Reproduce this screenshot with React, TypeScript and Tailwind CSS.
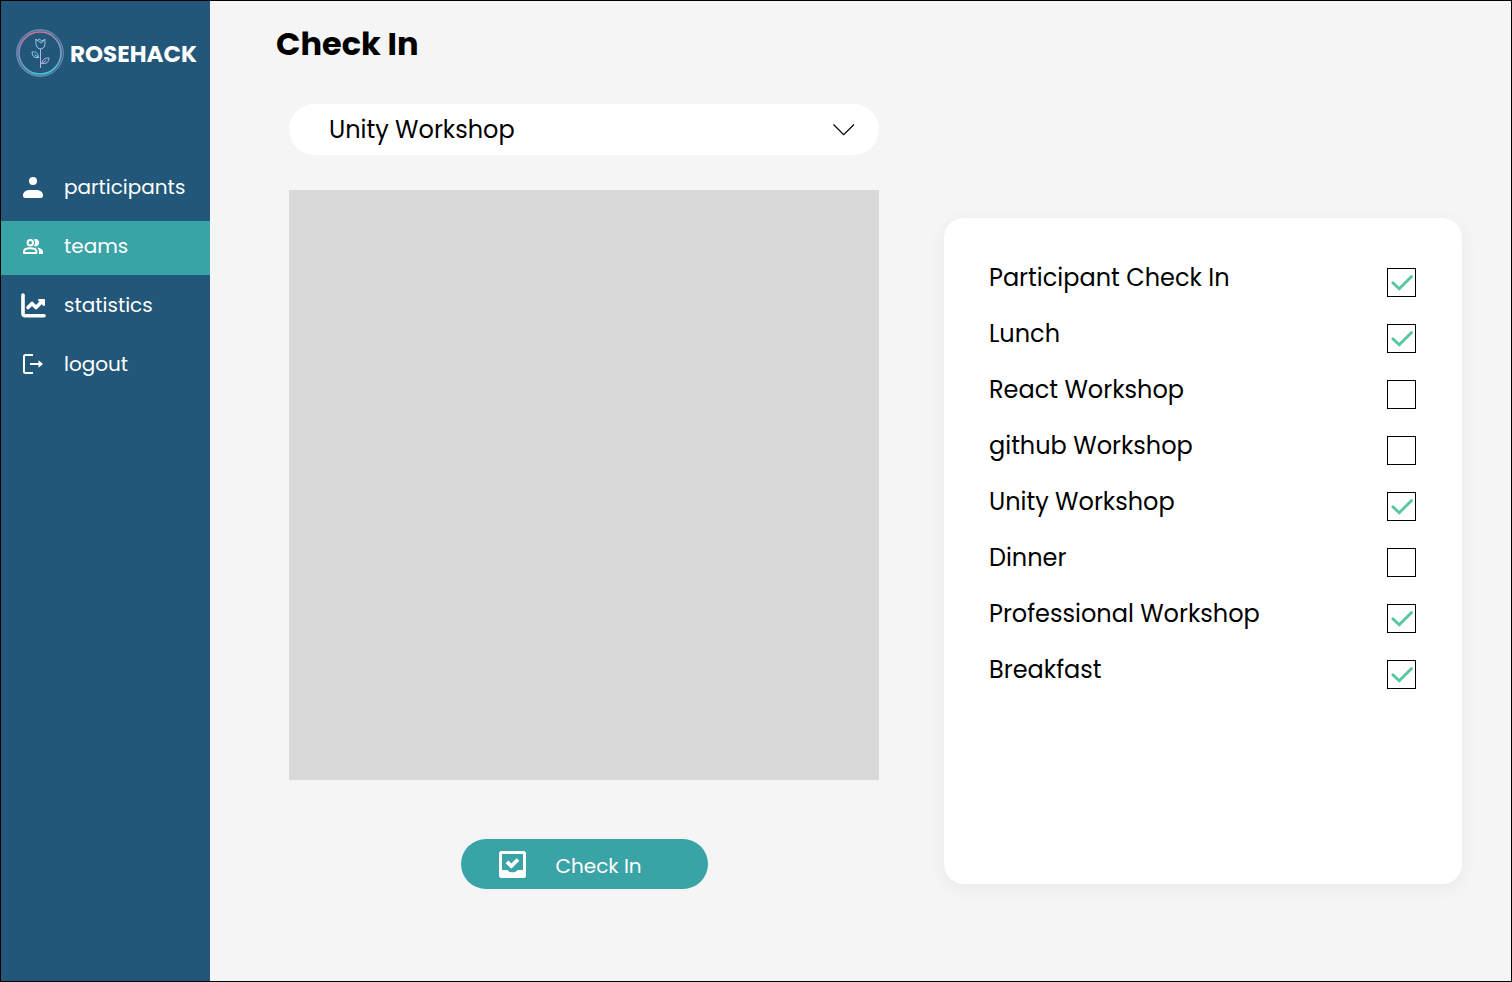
import { useState } from "react";
import type { ReactNode } from "react";

const EVENTS = [
  { name: "Participant Check In", done: true },
  { name: "Lunch", done: true },
  { name: "React Workshop", done: false },
  { name: "github Workshop", done: false },
  { name: "Unity Workshop", done: true },
  { name: "Dinner", done: false },
  { name: "Professional Workshop", done: true },
  { name: "Breakfast", done: true },
];

function RoseLogo() {
  return (
    <svg viewBox="0 0 48 48" className="size-12 shrink-0" fill="none" aria-hidden="true">
      <defs>
        <linearGradient id="ring" x1="0.3" y1="0" x2="0.6" y2="1">
          <stop offset="0" stopColor="#e0708f" />
          <stop offset="0.3" stopColor="#8a86b8" />
          <stop offset="0.7" stopColor="#6f9fd0" />
          <stop offset="1" stopColor="#35cfd8" />
        </linearGradient>
      </defs>
      <circle cx="24" cy="24" r="23.3" stroke="#8fa9cb" strokeWidth="0.8" />
      <circle cx="24" cy="24" r="21" stroke="url(#ring)" strokeWidth="1.600" />
      <ellipse cx="23.4" cy="24" rx="22" ry="22.4" stroke="#8e9fd0" strokeWidth="0.5" />
      <g stroke="#9cc9ee" strokeWidth="1" strokeLinejoin="round" strokeLinecap="round">
        <path d="M20 10.500c-.6 5 .2 9 4.500 9.500 4.400-.5 5-4.500 4.300-9.500l-3 1.500-2.600-2-1.500 1.300z" />
        <path d="M20 10.500l5.500 3.500 3.300-3.500" />
        <path d="M24.500 20v18.500" stroke="#b3b4ea" />
        <path d="M22.500 28.500c-4 .8-6-.8-6.500-5.500 4-.6 6 .8 6.500 5.500zM22.500 28.500L19 26" />
        <path d="M26 34.500c.3-4 2.500-5.600 7-5.500-.4 4.500-2.500 6-7 5.500zM26 34.500l4-3" stroke="#b3b4ea" />
      </g>
    </svg>
  );
}

function PersonIcon() {
  return (
    <svg viewBox="0 0 20 21" className="h-[21px] w-5" fill="currentColor" aria-hidden="true">
      <circle cx="10" cy="4" r="4" />
      <path d="M0 18.500C0 14.500 3.500 13 7 13h6c3.500 0 7 1.500 7 5.500a2.500 2.500 0 0 1-2.500 2.500h-15A2.500 2.500 0 0 1 0 18.500z" />
    </svg>
  );
}

function TeamIcon() {
  return (
    <svg viewBox="0 0 20 15" className="h-[15px] w-5" fill="none" aria-hidden="true">
      <circle cx="7.300" cy="3.700" r="2.700" stroke="currentColor" strokeWidth="2" />
      <path
        d="M1 14v-1.600C1 10.300 4.200 9.300 7.200 9.300s6.200 1 6.200 3.100V14z"
        stroke="currentColor"
        strokeWidth="2"
        strokeLinejoin="round"
      />
      <path d="M11 .3a3.700 3.700 0 1 1 0 6.800c1.300-2 1.300-4.800 0-6.800z" fill="currentColor" />
      <path d="M14 8.600c3.300.5 6 1.900 6 4.200V15h-4v-2.200c0-1.800-.8-3.200-2-4.200z" fill="currentColor" />
    </svg>
  );
}

function StatisticsIcon() {
  return (
    <svg
      viewBox="0 0 25 25"
      className="size-[25px]"
      fill="none"
      stroke="currentColor"
      strokeLinecap="round"
      strokeLinejoin="round"
      aria-hidden="true"
    >
      <path d="M2 2v18.500Q2 22.700 4.300 22.700H23" strokeWidth="3.600" />
      <path d="M7 14.500l4-4 4 4 6-6" strokeWidth="3.600" />
      <path d="M18 7h5v5z" fill="currentColor" strokeWidth="2" />
    </svg>
  );
}

function LogoutIcon() {
  return (
    <svg viewBox="0 0 20 20" className="size-5" fill="none" stroke="currentColor" strokeWidth="2" aria-hidden="true">
      <path d="M10 1H2.500Q1 1 1 2.500v15Q1 19 2.500 19H10" />
      <path d="M7 10h10" />
      <path d="M15.500 6.200L20 10l-4.500 3.800z" fill="currentColor" stroke="none" />
    </svg>
  );
}

function InboxCheckIcon() {
  return (
    <svg viewBox="0 0 27 27" className="size-[27px]" aria-hidden="true">
      <path
        fill="currentColor"
        fillRule="evenodd"
        d="M2.500 0h22Q27 0 27 2.500v22Q27 27 24.500 27h-22Q0 27 0 24.500v-22Q0 0 2.500 0zM3 3v16h5.500c1 1.500 2.600 2.300 5 2.300s4-.8 5-2.300H24V3z"
      />
      <path d="M8 10.800l4.300 4.200L19 8.500" fill="none" stroke="currentColor" strokeWidth="3.800" />
    </svg>
  );
}

function NavItem({ icon, label, active = false }: { icon: ReactNode; label: string; active?: boolean }) {
  return (
    <li>
      <a
        href={"#" + label}
        aria-current={active ? "page" : undefined}
        className={
          active
            ? "flex h-[54px] items-center gap-[18px] bg-[#3aa3a5] pb-1 pl-[19px] text-white"
            : "flex h-[54px] items-center gap-[18px] pb-1 pl-[19px] text-white"
        }
      >
        <span className="flex w-[26px] justify-center">{icon}</span>
        <span className="text-xl">{label}</span>
      </a>
    </li>
  );
}

function Sidebar() {
  return (
    <aside className="w-[209px] shrink-0 bg-[#235779]">
      <a href="#home" className="flex items-center gap-1.5 pt-7 pl-[15px] text-white">
        <RoseLogo />
        <span className="pt-px text-[23px] leading-8 font-bold">ROSEHACK</span>
      </a>
      <nav className="mt-[85px]">
        <ul className="flex flex-col gap-[5px]">
          <NavItem icon={<PersonIcon />} label="participants" />
          <NavItem icon={<TeamIcon />} label="teams" active />
          <NavItem icon={<StatisticsIcon />} label="statistics" />
          <NavItem icon={<LogoutIcon />} label="logout" />
        </ul>
      </nav>
    </aside>
  );
}

function EventRow({ name, done }: { name: string; done: boolean }) {
  return (
    <li>
      <label className="flex h-[29px] items-start justify-between gap-4">
        <span className="-mt-1 text-2xl leading-7">{name}</span>
        <span className="relative size-[29px] shrink-0">
          <input
            type="checkbox"
            defaultChecked={done}
            className="peer block size-[29px] appearance-none border border-black bg-white"
          />
          <svg
            viewBox="0 0 29 29"
            className="pointer-events-none absolute inset-0 hidden size-full peer-checked:block"
            fill="none"
            stroke="#56c7a0"
            strokeWidth="2.800"
            aria-hidden="true"
          >
            <path d="M5 14l7.200 6.800L25.300 7.700" />
          </svg>
        </span>
      </label>
    </li>
  );
}

export default function App() {
  const [event, setEvent] = useState("Unity Workshop");

  return (
    <div className="flex min-h-screen border border-black bg-[#f5f5f5] font-['Poppins','Inter',sans-serif] text-black">
      <Sidebar />
      <main className="flex-1 pb-[92px]">
        <h1 className="pt-[23px] pl-[66px] text-[32px] leading-10 font-bold">Check In</h1>
        <div className="mt-10 grid grid-cols-[590fr_518fr] gap-[65px] pr-[49px] pl-[79px]">
          <section className="flex flex-col items-center">
            <div className="relative w-full">
              <select
                aria-label="Event"
                value={event}
                onChange={(e) => setEvent(e.target.value)}
                className="block h-[51px] w-full appearance-none rounded-full bg-white px-10 text-2xl"
              >
                {EVENTS.map((item) => (
                  <option key={item.name}>{item.name}</option>
                ))}
              </select>
              <svg
                viewBox="0 0 22 12"
                className="pointer-events-none absolute top-5 right-6 h-3 w-[22px]"
                fill="none"
                stroke="black"
                strokeWidth="1.200"
                aria-hidden="true"
              >
                <path d="M0.500 0.500L10.700 10.700L21 0.500" />
              </svg>
            </div>
            <div className="mt-[35px] aspect-square w-full bg-[#d9d9d9]" />
            <button
              type="button"
              className="mt-[59px] flex h-[50px] w-[247px] items-center gap-[30px] rounded-full bg-[#3aa3a5] pl-[38px] text-xl text-white"
            >
              <InboxCheckIcon />
              <span className="pt-1">Check In</span>
            </button>
          </section>
          <section className="mt-[114px] mb-[5px] rounded-[20px] bg-white pt-[50px] pr-[46px] pl-[45px] shadow-[0_4px_20px_rgba(0,0,0,0.05)]">
            <ul className="flex flex-col gap-[27px]">
              {EVENTS.map((item) => (
                <EventRow key={item.name} name={item.name} done={item.done} />
              ))}
            </ul>
          </section>
        </div>
      </main>
    </div>
  );
}
